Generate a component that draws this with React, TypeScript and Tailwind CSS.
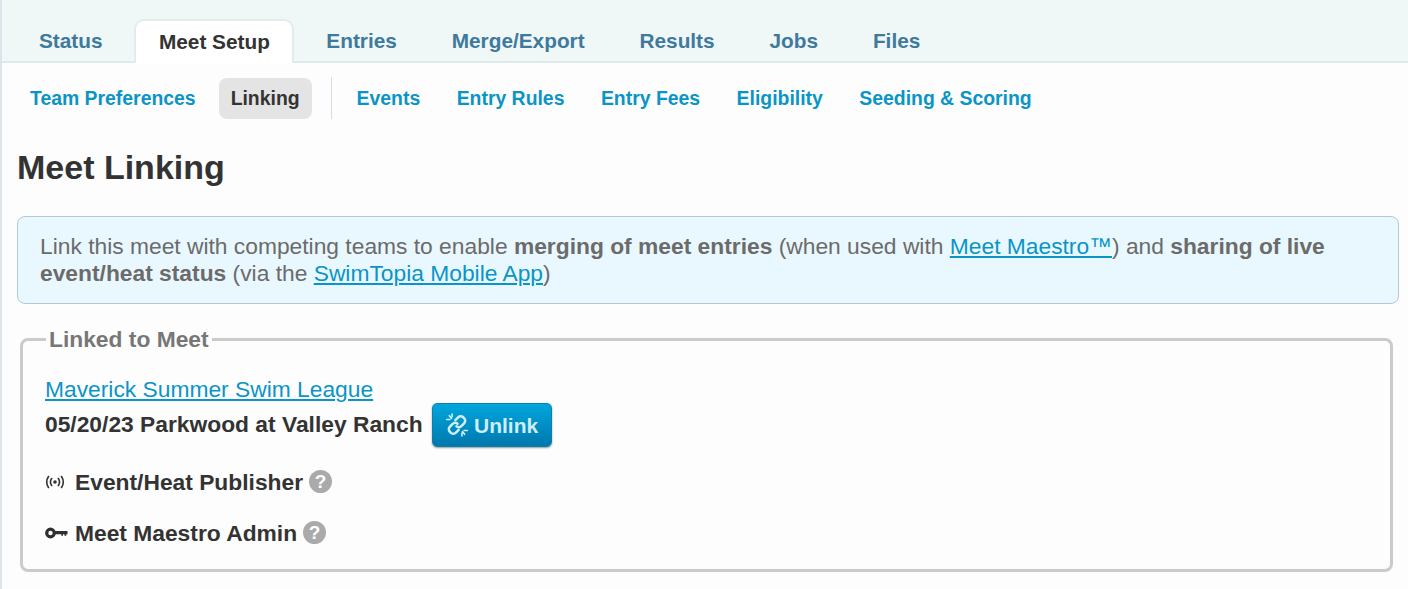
import React from "react";

const mainTabs = ["Status", "Meet Setup", "Entries", "Merge/Export", "Results", "Jobs", "Files"];
const leftLinks = ["Team Preferences", "Linking"];
const rightLinks = ["Events", "Entry Rules", "Entry Fees", "Eligibility", "Seeding & Scoring"];

function UnlinkIcon() {
  return (
    <svg width="24" height="24" viewBox="0 0 22 22" fill="none" stroke="#cdeefa" strokeWidth="2.300" strokeLinecap="round">
      <path d="M9.500 6.500 12 4a3.400 3.400 0 0 1 4.800 0l.7.7a3.400 3.400 0 0 1 0 4.800L15 12a3.400 3.400 0 0 1-4.500.2" />
      <path d="M12.500 15.500 10 18a3.400 3.400 0 0 1-4.800 0l-.7-.7a3.400 3.400 0 0 1 0-4.800L7 10a3.400 3.400 0 0 1 4.500-.2" />
      <path d="M4 2.500 6 5M1.500 6H4.500M6.500 1V3.500M18 19.500 16 17M20.500 16H17.500M15.500 21V18.500" strokeWidth="1.500" />
    </svg>
  );
}

function BroadcastIcon() {
  return (
    <svg width="20" height="14" viewBox="0 0 20 14" fill="none" stroke="#333" strokeWidth="1.600" strokeLinecap="round">
      <circle cx="10" cy="7" r="1.800" fill="#333" stroke="none" />
      <path d="M6.700 3.500a6 6 0 0 0 0 7M13.300 3.500a6 6 0 0 1 0 7" />
      <path d="M3.500 1.500a10 10 0 0 0 0 11M16.500 1.500a10 10 0 0 1 0 11" />
    </svg>
  );
}

function KeyIcon() {
  return (
    <svg width="23" height="12" viewBox="0 0 23 12" fill="none">
      <circle cx="5.500" cy="6" r="3.800" stroke="#2f2f2f" strokeWidth="3.200" />
      <path d="M9 4H22.500V7.200H21.300V8.800H19.500V7.200H18V8.800H16.300V7.200H9Z" fill="#2f2f2f" />
    </svg>
  );
}

function HelpBadge() {
  return (
    <span className="ml-[6px] -mt-[2px] w-[23px] h-[23px] rounded-full bg-[#aaaaaa] flex items-center justify-center text-white text-[19px] leading-none font-bold">
      ?
    </span>
  );
}

export default function App() {
  return (
    <div className="h-[589px] overflow-hidden bg-[#fdfdfd] border-l-2 border-[#dde5ea] font-['Liberation_Sans',Arial,sans-serif] text-[#333]">
      <nav className="h-[63px] bg-[#eff7f7] border-b-2 border-[#dfe9ec] flex items-end pl-[9.500px]">
        {mainTabs.map((tab) =>
          tab === "Meet Setup" ? (
            <div
              key={tab}
              className="h-[44px] -mb-[2px] mx-[4.500px] px-[22.500px] pt-[8px] bg-white border-2 border-b-0 border-[#e3eced] rounded-t-[10px] text-[20.800px] leading-[26px] font-bold text-[#333]"
            >
              {tab}
            </div>
          ) : (
            <div key={tab} className="h-[41px] px-[27.450px] pt-[9px] text-[20.800px] leading-[24px] font-bold text-[#3f7a9c]">
              {tab}
            </div>
          ),
        )}
      </nav>

      <div className="flex items-center h-[42px] mt-[14px] pl-[28px]">
        {leftLinks.map((link) =>
          link === "Linking" ? (
            <div key={link} className="h-[41px] ml-[23px] px-[12px] pt-[2px] flex items-center bg-[#e4e4e4] rounded-[8px] text-[19.400px] font-bold text-[#333]">
              {link}
            </div>
          ) : (
            <div key={link} className="pt-[2px] text-[19.400px] font-bold text-[#0a95c6]">
              {link}
            </div>
          ),
        )}
        <div className="w-px h-[42px] bg-[#d5dcea] ml-[19px] mr-[25px]" />
        <div className="flex gap-[36.500px] pt-[2px]">
          {rightLinks.map((link) => (
            <div key={link} className="text-[19.400px] font-bold text-[#0a95c6]">
              {link}
            </div>
          ))}
        </div>
      </div>

      <h1 className="mt-[28px] ml-[15px] text-[34px] leading-[40px] font-bold text-[#333]">Meet Linking</h1>

      <div className="mt-[29px] ml-[15px] mr-[9px] h-[88px] px-[22px] py-[16px] bg-[#e9f8ff] border border-[#b0c8d8] rounded-[8px] text-[22.800px] leading-[27px] text-[#6b6b6b]">
        Link this meet with competing teams to enable <b>merging of meet entries</b> (when used with{" "}
        <a className="text-[#0a95c6] underline">Meet Maestro™</a>) and <b>sharing of live event/heat status</b> (via the{" "}
        <a className="text-[#0a95c6] underline">SwimTopia Mobile App</a>)
      </div>

      <fieldset className="mt-[22px] ml-[18px] mr-[15px] h-[246px] border-[3px] border-[#cbcbcb] rounded-[8px] px-[22px]">
        <legend className="ml-[1px] px-[3px] text-[22.800px] leading-[26px] font-bold text-[#777]">Linked to Meet</legend>
        <a className="block mt-[24px] text-[22.800px] leading-[27px] text-[#0a95c6] underline">Maverick Summer Swim League</a>
        <div className="flex items-center gap-[9px] text-[22.800px] font-bold text-[#333]">
          <span className="-mt-[2px]">05/20/23 Parkwood at Valley Ranch</span>
          <div className="w-[120px] h-[44px] flex items-center justify-center gap-[5px] rounded-[5px] bg-gradient-to-b from-[#00a7dd] to-[#0078ad] border border-[#0a81ad] shadow-[0_1px_2px_rgba(0,0,0,0.4)] text-[#cdeefa] text-[21px] leading-none">
            <UnlinkIcon />
            Unlink
          </div>
        </div>
        <div className="flex items-center mt-[20px] h-[30px] text-[22.800px] font-bold text-[#333]">
          <span className="w-[30px] flex"><BroadcastIcon /></span>
          Event/Heat Publisher
          <HelpBadge />
        </div>
        <div className="flex items-center mt-[21px] h-[30px] text-[22.800px] font-bold text-[#333]">
          <span className="w-[30px] flex"><KeyIcon /></span>
          Meet Maestro Admin
          <HelpBadge />
        </div>
      </fieldset>
    </div>
  );
}
